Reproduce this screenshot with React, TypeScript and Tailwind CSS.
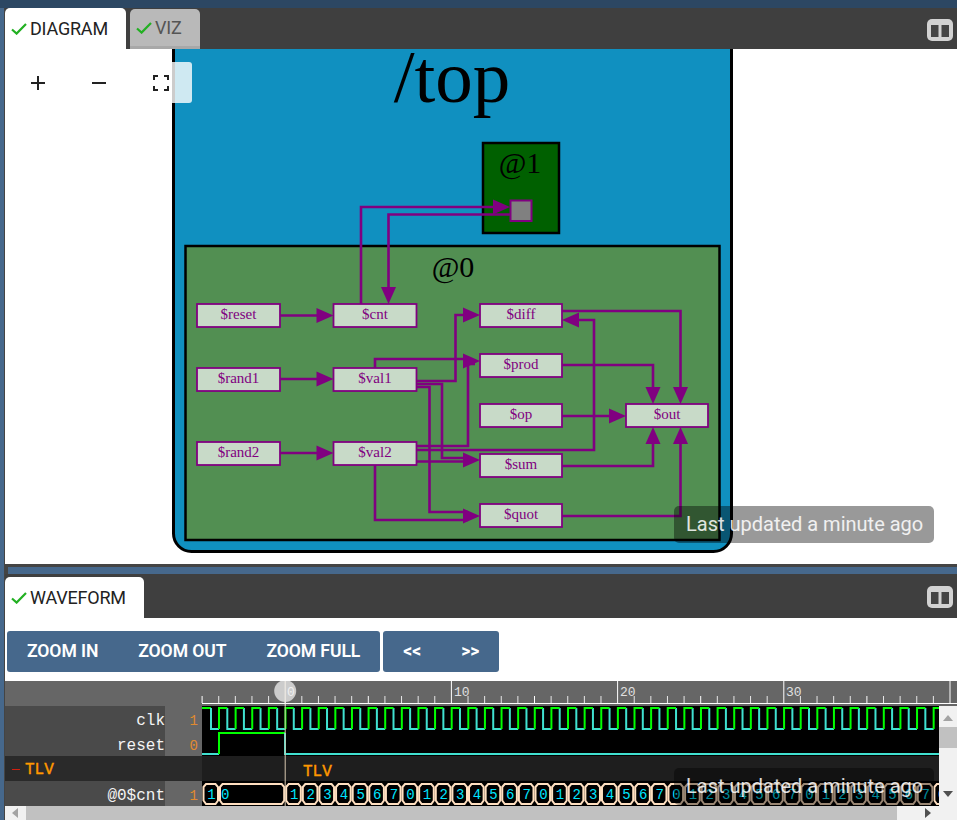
import React from "react";

const P = "#800080";

function Check({ className }: { className?: string }) {
  return (
    <svg width="16" height="12" viewBox="0 0 16 12" className={className} fill="none">
      <path d="M1 6.5 L5.6 10.6 L15 1" stroke="#22b022" strokeWidth="2.2" />
    </svg>
  );
}

function SplitIcon() {
  return (
    <svg width="26" height="22" viewBox="0 0 26 22">
      <rect width="26" height="22" rx="5" fill="#d2d2d2" />
      <rect x="4" y="6" width="7.5" height="12" fill="#444" />
      <rect x="14.5" y="6" width="7.5" height="12" fill="#444" />
    </svg>
  );
}

function Arrow({ x, y, dir }: { x: number; y: number; dir: "r" | "l" | "u" | "d" }) {
  const L = 17, W = 7.5;
  const pts =
    dir === "r" ? `${x},${y} ${x - L},${y - W} ${x - L},${y + W}` :
    dir === "l" ? `${x},${y} ${x + L},${y - W} ${x + L},${y + W}` :
    dir === "d" ? `${x},${y} ${x - W},${y - L} ${x + W},${y - L}` :
    `${x},${y} ${x - W},${y + L} ${x + W},${y + L}`;
  return <polygon points={pts} fill={P} />;
}

const nodes: [string, number, number, number, number][] = [
  ["$reset", 197, 304, 83, 23],
  ["$cnt", 333.5, 304, 83, 23],
  ["$diff", 480, 304, 82, 23],
  ["$prod", 480, 354, 82, 23],
  ["$rand1", 197, 368, 83, 23],
  ["$val1", 333.5, 368, 83, 23],
  ["$op", 480, 404, 82, 23],
  ["$out", 626, 404, 82, 23],
  ["$rand2", 197, 442, 83, 23],
  ["$val2", 333.5, 442, 83, 23],
  ["$sum", 480, 454, 82, 23],
  ["$quot", 480, 504, 82, 23],
];

const edges: string[] = [
  "M280,315.5 H320",
  "M361,304 V207 H498",
  "M510,214.5 H388.5 V292",
  "M280,379 H320",
  "M280,453 H320",
  "M416,381 H455.5 V315 H466",
  "M375,368 V359 H468",
  "M416,384 H442 V458 H468",
  "M416,387 H429.5 V512 H468",
  "M416,446 H468 V364 H475",
  "M416,450 H594 V320 H575",
  "M416,461.5 H468",
  "M375,465 V520 H468",
  "M562,365 H653 V392",
  "M562,311 H680.5 V392",
  "M562,416 H612",
  "M562,466 H653 V440",
  "M562,516 H680.5 V440",
];

const arrows: [number, number, "r" | "l" | "u" | "d"][] = [
  [333.5, 315.5, "r"],
  [510, 207, "r"],
  [388.5, 304, "d"],
  [333.5, 379, "r"],
  [333.5, 453, "r"],
  [480, 315, "r"],
  [480, 361, "r"],
  [480, 460, "r"],
  [480, 516, "r"],
  [562, 320, "l"],
  [653, 404, "d"],
  [680.5, 404, "d"],
  [626, 416, "r"],
  [653, 427, "u"],
  [680.5, 427, "u"],
];

function Diagram() {
  return (
    <svg viewBox="5 49 952 515" width="952" height="515" className="block">
      <rect x="173.5" y="-20" width="558" height="571.5" rx="18" fill="#1090c0" stroke="#000" strokeWidth="3" />
      <text x="452" y="102" textAnchor="middle" fontFamily="'Liberation Serif', serif" fontSize="75" fill="#000">/top</text>
      <rect x="483" y="143" width="76" height="90" fill="#006000" stroke="#000" strokeWidth="2.5" />
      <text x="520" y="173" textAnchor="middle" fontFamily="'Liberation Serif', serif" fontSize="30" fill="#000">@1</text>
      <rect x="185.5" y="246" width="534" height="294" fill="#528f52" stroke="#000" strokeWidth="2.5" />
      <text x="453" y="277" textAnchor="middle" fontFamily="'Liberation Serif', serif" fontSize="30" fill="#000">@0</text>
      <rect x="510.5" y="200.5" width="21" height="20.5" fill="#808080" stroke={P} strokeWidth="2" />
      {nodes.map(([t, x, y, w, h]) => (
        <g key={t}>
          <rect x={x} y={y} width={w} height={h} fill="#c8dac8" stroke={P} strokeWidth="1.8" />
          <text x={x + w / 2} y={y + 15} textAnchor="middle" fontFamily="'Liberation Serif', serif" fontSize="15" fill={P}>{t}</text>
        </g>
      ))}
      {edges.map((d, i) => (
        <path key={i} d={d} fill="none" stroke={P} strokeWidth="2.6" />
      ))}
      {arrows.map(([x, y, dir], i) => (
        <Arrow key={i} x={x} y={y} dir={dir} />
      ))}
    </svg>
  );
}

const T0 = 285.2;
const STEP = 16.62;

function Ruler() {
  const ticks: number[] = [];
  for (let i = -5; i * STEP + T0 < 957; i++) ticks.push(i);
  return (
    <svg width="952" height="25" viewBox="5 681 952 25" className="block">
      <rect x="5" y="681" width="952" height="25" fill="#666" />
      <line x1="202" x2="957" y1="703.5" y2="703.5" stroke="#fff" strokeWidth="1" />
      {ticks.map((i) => {
        const x = T0 + i * STEP;
        const major = i % 10 === 0 && i !== 0;
        return <line key={i} x1={x} x2={x} y1={major ? 681 : 696} y2={703} stroke={i % 5 === 0 ? "#fff" : "#e8e8e8"} strokeWidth={1} />;
      })}
      <circle cx={T0} cy={691} r={11} fill="#cccccc" />
      {[[0, 287], [10, 454], [20, 620], [30, 786]].map(([n, x]) => (
        <text key={n} x={x} y={696} fontFamily="'Liberation Mono', monospace" fontSize="13" fill={n === 0 ? "#f0f0f0" : "#e0e0e0"}>{n}</text>
      ))}
      <line x1={T0} x2={T0} y1={681} y2={706} stroke="#f5f0e8" strokeWidth="1" />
    </svg>
  );
}

function Waves() {
  const hi: string[] = [];
  const lo: string[] = [];
  for (let k = 0; k * STEP + 219 < 940; k++) {
    const r = 219 + k * STEP;
    hi.push(`M${r},729 V708 H${r + 8.3}`);
    lo.push(`M${r + 8.3},708 V729 H${r + STEP}`);
  }
  const pills: { x0: number; x1: number; t: string }[] = [
    { x0: 202.5, x1: 219, t: "1" },
    { x0: 219, x1: T0, t: "0" },
  ];
  for (let k = 0; k < 40; k++) {
    pills.push({ x0: T0 + k * STEP, x1: T0 + (k + 1) * STEP, t: String((k + 1) % 8) });
  }
  const pill = (a: number, b: number) => {
    const x0 = a + 1, x1 = b - 1;
    return `M${x0},787 L${x0 + 2.5},784 H${x1 - 2.5} L${x1},787 V800.5 L${x1 - 2.5},804 H${x0 + 2.5} L${x0},800.5 Z`;
  };
  return (
    <svg width="737" height="100" viewBox="202 706 737 100" className="block shrink-0">
      <rect x="202" y="706" width="737" height="100" fill="#000" />
      <rect x="202" y="756" width="737" height="25" fill="#1e1e1e" />
      <path d="M202,708 H211" stroke="#00ff00" strokeWidth="2" fill="none" />
      <path d="M211,708 V729 H219" stroke="#40e0d0" strokeWidth="2" fill="none" />
      {lo.map((d, i) => <path key={i} d={d} stroke="#40e0d0" strokeWidth="2" fill="none" />)}
      {hi.map((d, i) => <path key={i} d={d} stroke="#00ff00" strokeWidth="2" fill="none" />)}
      <path d="M202,754 H219" stroke="#40e0d0" strokeWidth="2" fill="none" />
      <path d="M219,754 V733 H285" stroke="#00ff00" strokeWidth="2" fill="none" />
      <path d="M285,733 V754 H939" stroke="#40e0d0" strokeWidth="2" fill="none" />
      <text x="303" y="775.5" fontFamily="'Liberation Mono', monospace" fontSize="16" fill="#ff9900" stroke="#ff9900" strokeWidth="0.4">TLV</text>
      {pills.map((p, i) => (
        <g key={i}>
          <path d={pill(p.x0, p.x1)} fill="#000" stroke="#ffdfc0" strokeWidth="2" />
          <text x={i === 1 ? 221 : (p.x0 + p.x1) / 2 - 3.6} y={799} fontFamily="'Liberation Mono', monospace" fontSize="14" fill="#00e5ff">{p.t}</text>
        </g>
      ))}
      <line x1={T0} x2={T0} y1="706" y2="806" stroke="#d8c8b0" strokeWidth="1" />
    </svg>
  );
}

function Tab({ label, active, w }: { label: string; active?: boolean; w: string }) {
  return (
    <div className={`${w} flex items-center rounded-t-[5px] pl-[6px] pt-[1px] ${active ? "bg-white text-[#222]" : "bg-[#b9b9b9] text-[#555] border-b-[3px] border-[#a8a8a8]"}`}>
      <Check className="shrink-0 mr-[3px]" />
      <span className="text-[18px] leading-none tracking-[-0.2px]">{label}</span>
    </div>
  );
}

function Toast({ className }: { className: string }) {
  return (
    <div className={`absolute left-[669px] w-[260px] h-[37px] rounded-[5px] bg-black/40 text-white/85 text-[20px] leading-[37px] pl-3 whitespace-nowrap ${className}`}>
      Last updated a minute ago
    </div>
  );
}

function Row({ label, value, className }: { label: string; value: string; className?: string }) {
  return (
    <div className={`flex h-[25px] ${className ?? ""}`}>
      <div className="w-[160px] bg-[#4a4a4a] text-right text-[#f4f4f4] text-[16px] leading-[30px]">{label}</div>
      <div className="w-[37px] bg-[#666] text-right text-[#e08a30] text-[14px] leading-[30px] pr-[4px]">{value}</div>
    </div>
  );
}

export default function App() {
  return (
    <div className="w-[957px] h-[820px] overflow-hidden relative bg-[#46688c] flex flex-col" style={{ fontFamily: "Roboto, sans-serif" }}>
      <div className="h-[8px] bg-[#2c4763] shrink-0" />
      <section className="ml-[4px] border-l border-[#444] shrink-0 h-[556px] flex flex-col">
        <div className="h-[41px] bg-[#3f3f3f] flex items-stretch justify-between pr-[4px]">
          <div className="flex items-end gap-[4px] h-full">
            <Tab label="DIAGRAM" active w="w-[121px] h-[41px]" />
            <Tab label="VIZ" w="w-[70px] h-[40px]" />
          </div>
          <div className="flex items-center pt-[2px]"><SplitIcon /></div>
        </div>
        <div className="relative flex-1 bg-white overflow-hidden">
          <Diagram />
          <div className="absolute left-[10px] top-[13px] w-[177px] h-[41px] rounded-[3px] bg-white/80 flex items-center text-[#222]">
            <svg width="16" height="16" viewBox="0 0 16 16" className="ml-[15px]" fill="none" stroke="currentColor" strokeWidth="2"><path d="M8 1 V15 M1 8 H15" /></svg>
            <svg width="16" height="16" viewBox="0 0 16 16" className="ml-[45px]" fill="none" stroke="currentColor" strokeWidth="2"><path d="M1 8 H15" /></svg>
            <svg width="16" height="16" viewBox="0 0 16 16" className="ml-[46px]" fill="none" stroke="currentColor" strokeWidth="2"><path d="M5 1 H1 V5 M11 1 H15 V5 M5 15 H1 V11 M11 15 H15 V11" /></svg>
          </div>
          <Toast className="top-[457px]" />
        </div>
      </section>
      <div className="h-[3px] ml-[4px] bg-[#444] shrink-0" />
      <div className="h-[7px] ml-[4px] shrink-0 border-l-[4px] border-[#444]" />
      <section className="ml-[4px] border-l border-[#444] flex-1 min-h-0 flex flex-col relative">
        <div className="h-[44px] bg-[#3f3f3f] flex items-end justify-between pr-[4px] shrink-0">
          <Tab label="WAVEFORM" active w="w-[139px] h-[41px]" />
          <div className="self-center pt-[2px]"><SplitIcon /></div>
        </div>
        <div className="bg-white flex-1 min-h-0 flex flex-col">
          <div className="h-[63px] pt-[13px] pl-[2px] flex gap-[3px] shrink-0">
            <div className="h-[41px] bg-[#46688c] rounded-[3px] flex items-center text-white font-semibold text-[17.6px] tracking-[-0.1px]">
              <span className="px-5">ZOOM IN</span>
              <span className="px-5">ZOOM OUT</span>
              <span className="px-5">ZOOM FULL</span>
            </div>
            <div className="h-[41px] bg-[#46688c] rounded-[3px] flex items-center text-white font-bold text-[17.6px]">
              <span className="px-5">&lt;&lt;</span>
              <span className="px-5">&gt;&gt;</span>
            </div>
          </div>
          <Ruler />
          <div className="flex h-[100px] shrink-0" style={{ fontFamily: "'Liberation Mono', monospace" }}>
            <div className="w-[197px] shrink-0">
              <Row label="clk" value="1" />
              <Row label="reset" value="0" />
              <div className="h-[25px] bg-[#2a2a2a] flex items-center pl-[7px] pt-[2px] text-[16px] text-[#ff9900] [-webkit-text-stroke:0.4px_#ff9900]">
                <span className="w-[8px] h-[1.5px] bg-[#d02010] mr-[5px]" />TLV
              </div>
              <Row label="@0$cnt" value="1" />
            </div>
            <Waves />
            <div className="flex-1 bg-[#f1f1f1] flex flex-col items-center">
              <svg width="10" height="6" viewBox="0 0 10 6" className="mt-[9px]"><path d="M5 0 L10 6 H0 Z" fill="#a3a3a3" /></svg>
              <div className="w-full h-[21px] bg-[#c1c1c1] mt-[6px]" />
              <svg width="10" height="6" viewBox="0 0 10 6" className="mt-[43px]"><path d="M5 6 L10 0 H0 Z" fill="#505050" /></svg>
            </div>
          </div>
          <div className="flex-1 min-h-0 bg-[#f1f1f1] flex items-center">
            <svg width="6" height="10" viewBox="0 0 6 10" className="ml-[7px]"><path d="M0 5 L6 0 V10 Z" fill="#a3a3a3" /></svg>
            <div className="h-full w-[871px] bg-[#c1c1c1] ml-[8px]" />
            <svg width="6" height="10" viewBox="0 0 6 10" className="ml-[28px]"><path d="M6 5 L0 0 V10 Z" fill="#505050" /></svg>
          </div>
        </div>
        <Toast className="top-[194px]" />
      </section>
    </div>
  );
}
